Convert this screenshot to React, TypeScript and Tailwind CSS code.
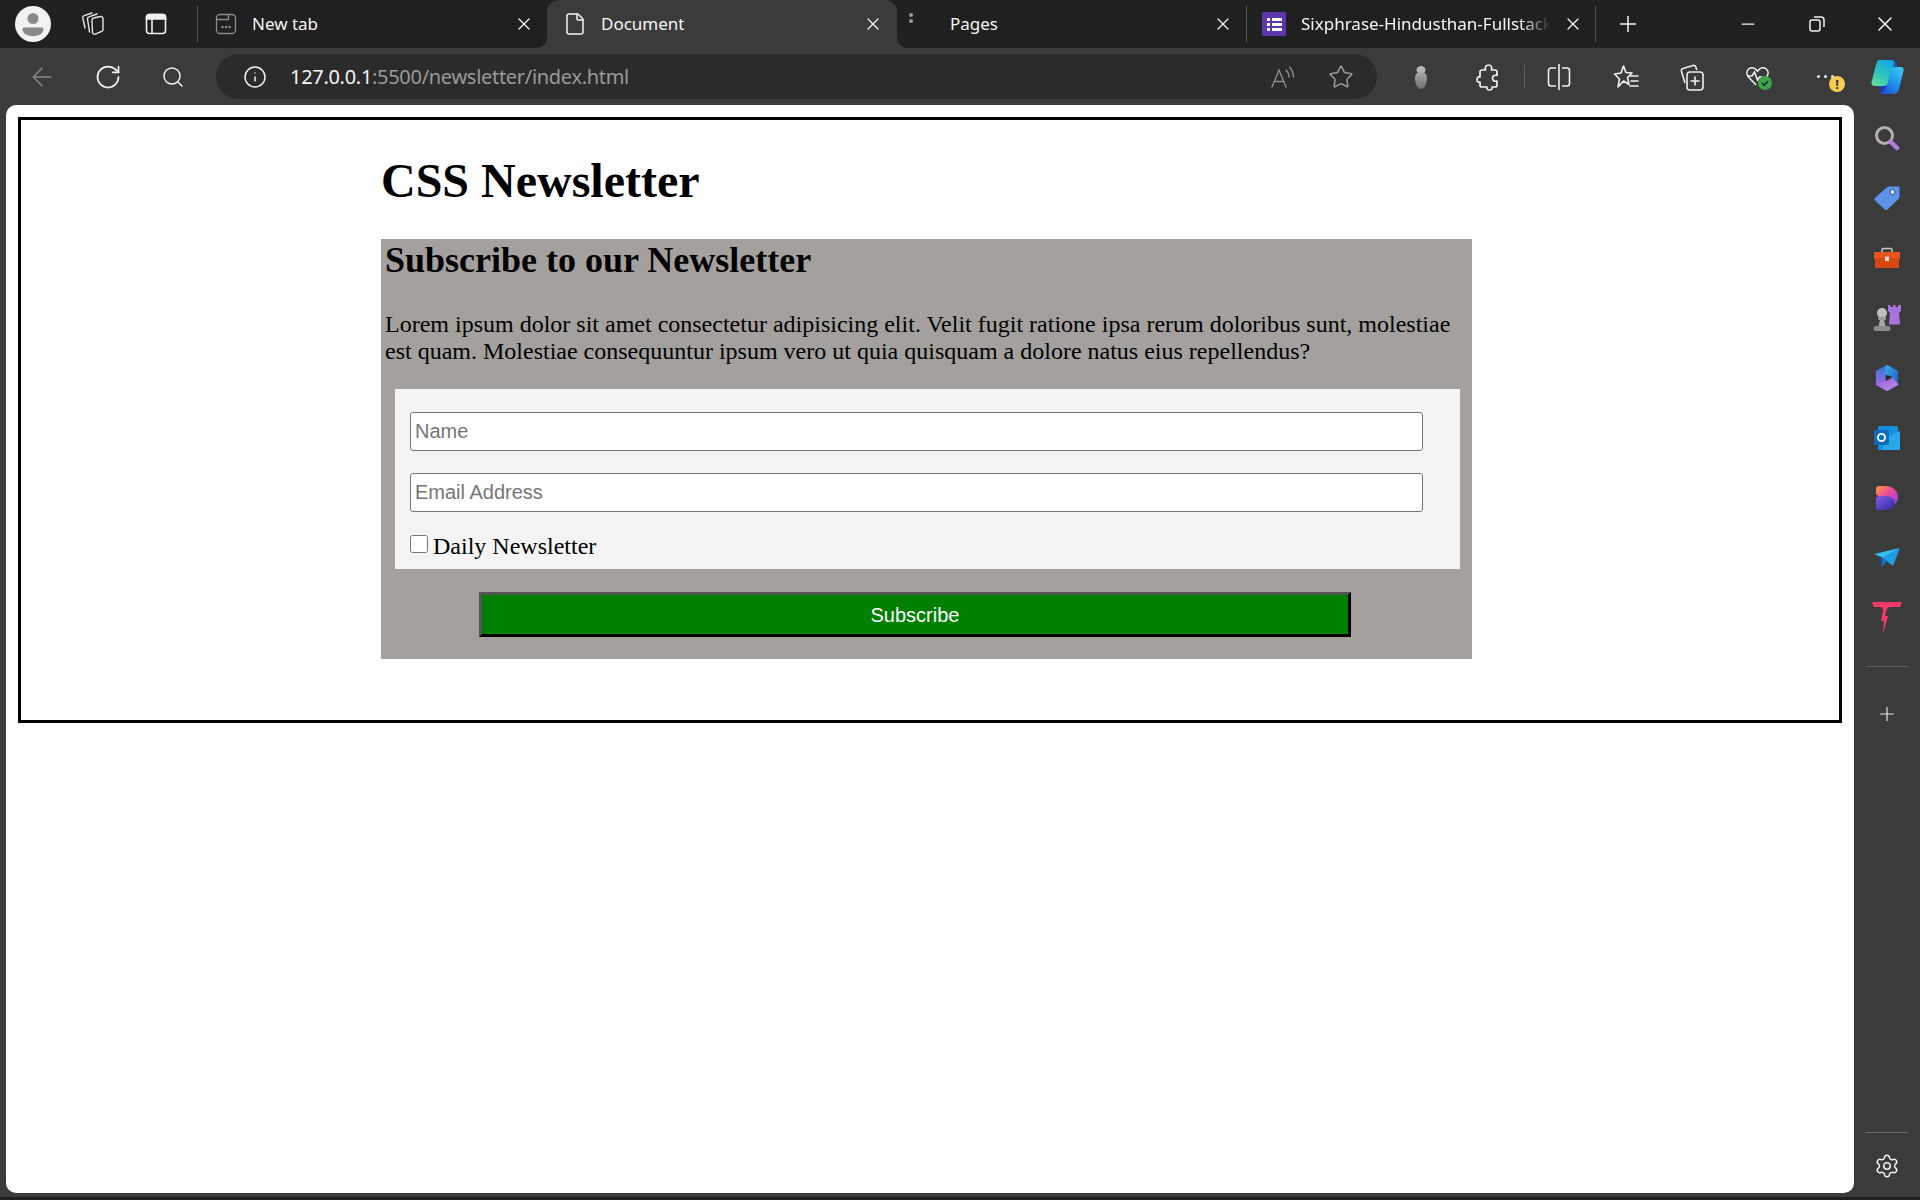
import { ArrowLeft, File, Info, Minus, Plus, RotateCw, Search, Settings, Star, X } from "lucide-react";

const uiFont = "font-['Noto_Sans',sans-serif]";

function Avatar() {
  return (
    <svg width="36" height="36" viewBox="0 0 36 36">
      <circle cx="18" cy="18" r="18" fill="#f2f2f2" />
      <circle cx="18" cy="12.5" r="5.5" fill="#8a8a8a" />
      <path d="M9 21.5h18a1.500 1.500 0 0 1 1.500 1.500c0 4.500-4.500 7-10.500 7s-10.500-2.500-10.500-7a1.500 1.500 0 0 1 1.500-1.500z" fill="#8a8a8a" />
    </svg>
  );
}

function WorkspacesIcon() {
  return (
    <svg width="24" height="24" viewBox="0 0 24 24" fill="none" stroke="#e6e6e6" strokeWidth="1.400" strokeLinecap="round" strokeLinejoin="round">
      <path d="M11 8a2 2 0 0 1 1.600-2l7-1.500a2 2 0 0 1 2.400 2v11a2 2 0 0 1-1.300 1.900l-6.500 2.800a2 2 0 0 1-2.700-1.700z" />
      <path d="M8.500 20 6.500 7a2 2 0 0 1 1.400-2.200L16 2" />
      <path d="M4 16 1.800 6a2 2 0 0 1 1.400-2.300L11 1" />
    </svg>
  );
}

function VerticalTabsIcon() {
  return (
    <svg width="22" height="22" viewBox="0 0 22 22" fill="none" stroke="#f0f0f0" strokeWidth="1.600">
      <rect x="1.500" y="1.500" width="19" height="19" rx="3" />
      <path d="M1.500 6h19v-2a2.500 2.500 0 0 0-2.500-2.500h-14a2.500 2.500 0 0 0-2.500 2.500z" fill="#f0f0f0" />
      <path d="M7 6v14.500" />
    </svg>
  );
}

function NewTabIcon() {
  return (
    <svg width="22" height="22" viewBox="0 0 22 22" fill="none" stroke="#8c8c8c" strokeWidth="1.300">
      <rect x="1.500" y="1.500" width="19" height="19" rx="3.500" />
      <path d="M1.500 6.500h12v-5" />
      <circle cx="7.500" cy="14" r=".6" fill="#8c8c8c" />
      <circle cx="11" cy="14" r=".6" fill="#8c8c8c" />
      <circle cx="14.500" cy="14" r=".6" fill="#8c8c8c" />
    </svg>
  );
}

function FormsIcon() {
  return (
    <svg width="24" height="24" viewBox="0 0 24 24">
      <rect width="24" height="24" rx="2" fill="#5e35b1" />
      <g fill="#fff">
        <rect x="5" y="6" width="3" height="3" />
        <rect x="10" y="6" width="10" height="3" />
        <rect x="5" y="11" width="3" height="3" />
        <rect x="10" y="11" width="10" height="3" />
        <rect x="5" y="16" width="3" height="3" />
        <rect x="10" y="16" width="10" height="3" />
      </g>
    </svg>
  );
}

function ReadAloudIcon() {
  return (
    <svg width="28" height="26" viewBox="0 0 28 26" fill="none" stroke="#8f8f8f" strokeWidth="1.400" strokeLinecap="round">
      <path d="M3 23 10 6l7 17M5.500 17.500h9" />
      <path d="M17 6c2 2 3 4 3 7M20.500 3c2.500 2.800 4 6 4 10" />
    </svg>
  );
}

function BugIcon() {
  return (
    <svg width="22" height="28" viewBox="0 0 22 28">
      <defs>
        <linearGradient id="bug" x1="0" y1="0" x2="0" y2="1">
          <stop offset="0" stopColor="#a8a8a8" />
          <stop offset="1" stopColor="#6f6f6f" />
        </linearGradient>
      </defs>
      <ellipse cx="11" cy="7" rx="4.500" ry="4" fill="#b5b5b5" />
      <path d="M5 15c0-4 2.500-6 6-6s6 2 6 6c0 6-2.500 11-6 11s-6-5-6-11z" fill="url(#bug)" />
    </svg>
  );
}

function PuzzleIcon() {
  return (
    <svg width="24" height="28" viewBox="0 0 24 28" fill="none" stroke="#f0f0f0" strokeWidth="1.700" strokeLinejoin="round">
      <path d="M6 7h3.500c-.8-3 .5-5 3-5s3.800 2 3 5H19a2 2 0 0 1 2 2v3.500c-2.800-.8-4.500.6-4.500 2.800s1.700 3.500 4.500 2.700V22a2 2 0 0 1-2 2h-3c.6 2-.8 3-2.500 3s-3.200-1-2.500-3H6a2 2 0 0 1-2-2v-3c-2 .6-3-.8-3-2.500s1-3.200 3-2.500V9a2 2 0 0 1 2-2z" />
    </svg>
  );
}

function SplitIcon() {
  return (
    <svg width="24" height="28" viewBox="0 0 24 28" fill="none" stroke="#f0f0f0" strokeWidth="1.600">
      <path d="M9 5H4a2.500 2.500 0 0 0-2.500 2.500v13A2.500 2.500 0 0 0 4 23h5M15 5h5a2.500 2.500 0 0 1 2.500 2.500v13A2.500 2.500 0 0 1 20 23h-5" />
      <path d="M12 1v26" />
    </svg>
  );
}

function FavouritesIcon() {
  return (
    <svg width="26" height="28" viewBox="0 0 26 28" fill="none" stroke="#f0f0f0" strokeWidth="1.600" strokeLinejoin="round">
      <path d="M10.500 3 13 9.500l6 .5-4.500 4.500 1.500 7-5.500-3.500L5 24l1.500-8L1.500 11l6.500-1z" />
      <path d="M17 13h8M18 18h7M17 23h8" strokeLinecap="round" />
    </svg>
  );
}

function CollectionsIcon() {
  return (
    <svg width="26" height="30" viewBox="0 0 26 30" fill="none" stroke="#f0f0f0" strokeWidth="1.600" strokeLinejoin="round">
      <path d="M6 21 2.500 9.500c-.5-1.500.2-2.700 1.500-3L14 3.500c1.300-.4 2.300.2 2.800 1.500l1 3" />
      <rect x="8" y="10" width="16" height="18" rx="3" />
      <path d="M16 14.500v9M11.500 19h9" />
    </svg>
  );
}

function HealthIcon() {
  return (
    <svg width="30" height="30" viewBox="0 0 30 30" fill="none">
      <path d="M12 23 4.500 15c-5-6 3-13 8-7l1 1.200 1-1.200c5-6 13 1 8 7" stroke="#f0f0f0" strokeWidth="1.600" />
      <path d="M3 14h5l2.500-4 3 8 2-3h3" stroke="#f0f0f0" strokeWidth="1.600" />
      <circle cx="21" cy="21" r="7" fill="#3fa14a" />
      <path d="m18 21 2.200 2.200 3.800-4" stroke="#123" strokeWidth="1.500" />
    </svg>
  );
}

function CopilotIcon() {
  return (
    <svg width="33" height="36" viewBox="0 0 33 36">
      <defs>
        <linearGradient id="cpA" x1="0.700" y1="0" x2="0.200" y2="1">
          <stop offset="0" stopColor="#12a8e0" />
          <stop offset="0.550" stopColor="#2fc4c0" />
          <stop offset="1" stopColor="#5fdc98" />
        </linearGradient>
        <linearGradient id="cpB" x1="0.800" y1="0" x2="0.200" y2="1">
          <stop offset="0" stopColor="#3cc6f5" />
          <stop offset="0.600" stopColor="#1c8cec" />
          <stop offset="1" stopColor="#2450d8" />
        </linearGradient>
      </defs>
      <path d="M20 1c3 0 6 2 6 7l-6 8-2-8z" fill="#1658b8" />
      <path d="M7 27c2 2 3 4 5 6l8-4-6-5z" fill="#1e3cc0" />
      <path d="M9 1h11c2.500 0 3.500 1.500 3 3.500L18 23c-.6 2.200-2.500 4-5 4H4c-2.500 0-4-1.500-3.500-4L5.500 4C6 2 7 1 9 1z" fill="url(#cpA)" />
      <path d="M24 8h6c2 0 3 1.500 2.600 3.500L28 30c-.7 3-3 5-6 5H11c-1.500 0-2-1-1-1.500 3-1 5-3.500 6-7l4-15c.5-2 2-3.500 4-3.500z" fill="url(#cpB)" />
    </svg>
  );
}

function ToolbarIcons() {
  return (
    <>
      <div className="ml-[29px] flex w-[30px] justify-center"><BugIcon /></div>
      <div className="ml-[37px] flex w-[30px] justify-center"><PuzzleIcon /></div>
      <div className="ml-[21px] h-[24px] w-px bg-[#5f5f5f]" />
      <div className="ml-[19px] flex w-[30px] justify-center"><SplitIcon /></div>
      <div className="ml-[37px] flex w-[30px] justify-center"><FavouritesIcon /></div>
      <div className="ml-[36px] flex w-[30px] justify-center"><CollectionsIcon /></div>
      <div className="ml-[37px] flex w-[30px] justify-center"><HealthIcon /></div>
      <div className="relative ml-[36px] flex w-[30px] justify-center gap-[4px]">
        <span className="size-[3px] rounded-full bg-[#f0f0f0]" />
        <span className="size-[3px] rounded-full bg-[#f0f0f0]" />
        <span className="size-[3px] rounded-full bg-[#f0f0f0]" />
        <span className={`absolute left-[19px] top-[1px] flex size-[16px] items-center justify-center rounded-full bg-[#f5cd54] text-[13px] font-bold leading-none text-[#333] ${uiFont}`}>!</span>
      </div>
      <div className="ml-[31px] flex w-[33px] justify-center"><CopilotIcon /></div>
    </>
  );
}

function SideSearch() {
  return (
    <svg width="26" height="26" viewBox="0 0 26 26" fill="none">
      <circle cx="10.500" cy="10.500" r="8" stroke="#b4b0ad" strokeWidth="3" />
      <path d="m17 17 6 6" stroke="#b77be0" strokeWidth="4.500" strokeLinecap="round" />
    </svg>
  );
}

function SideTag() {
  return (
    <svg width="26" height="26" viewBox="0 0 26 26">
      <path d="M14 1.500h10.500a1 1 0 0 1 1 1V12a2 2 0 0 1-.6 1.400L13.500 24.500a2 2 0 0 1-2.800 0L1 15.500a2 2 0 0 1 0-2.800z" fill="#5c93e8" />
      <circle cx="18.500" cy="7" r="2.500" fill="#eef" stroke="#2c4f8a" />
    </svg>
  );
}

function SideToolbox() {
  return (
    <svg width="28" height="22" viewBox="0 0 28 22">
      <path d="M9 6V3a1.500 1.500 0 0 1 1.500-1.500h7A1.500 1.500 0 0 1 19 3v3" fill="none" stroke="#c9c9c9" strokeWidth="1.500" />
      <rect x="1" y="5" width="26" height="7" fill="#e8541e" />
      <rect x="2" y="11" width="24" height="10" rx="1" fill="#d9490f" />
      <rect x="12" y="9.500" width="4" height="4.500" fill="#d8d8d8" />
    </svg>
  );
}

function SideChess() {
  return (
    <svg width="28" height="28" viewBox="0 0 28 28">
      <circle cx="9" cy="9" r="5" fill="#bdbdbd" />
      <rect x="5" y="13" width="8" height="3" rx="1" fill="#9a9a9a" />
      <path d="M7 16h4l1.500 6h-7z" fill="#a8a8a8" />
      <rect x="0.500" y="22" width="17" height="5" rx="2.500" fill="#8c8c8c" />
      <path d="M15 1h2.500v2H20V1h2.500v2H25V1h3v6l-2 2 1 10c0 1-.5 1.500-1.500 1.500h-8c-1 0-1.500-.5-1.500-1.500l1-10-2-2z" fill="#a873dc" />
    </svg>
  );
}

function SideM365() {
  return (
    <svg width="26" height="28" viewBox="0 0 28 30">
      <defs>
        <linearGradient id="m3a" x1="0" y1="0" x2="1" y2="1">
          <stop offset="0" stopColor="#3aa8e8" />
          <stop offset="1" stopColor="#1f5fc8" />
        </linearGradient>
        <linearGradient id="m3b" x1="0.500" y1="0" x2="0.500" y2="1">
          <stop offset="0" stopColor="#3478d8" />
          <stop offset="1" stopColor="#9a6ce0" />
        </linearGradient>
        <linearGradient id="m3c" x1="0" y1="0" x2="1" y2="1">
          <stop offset="0" stopColor="#8a5fd8" />
          <stop offset="1" stopColor="#c58ae8" />
        </linearGradient>
      </defs>
      <path d="M3 8 14 2l-2 9v9l-9 2z" fill="url(#m3b)" stroke="url(#m3b)" strokeWidth="2" strokeLinejoin="round" />
      <path d="M14 2 25 8v14l-5-3.500V12l-8-1z" fill="url(#m3a)" stroke="url(#m3a)" strokeWidth="2" strokeLinejoin="round" />
      <path d="M3 22l9-2 8-4.500 5 6.500-11 6z" fill="url(#m3c)" stroke="url(#m3c)" strokeWidth="2" strokeLinejoin="round" />
      <path d="M12.500 11.500l6 3-6 3.500z" fill="#2a2a30" />
    </svg>
  );
}

function SideOutlook() {
  return (
    <svg width="26" height="26" viewBox="0 0 26 26">
      <rect x="4" y="1" width="20" height="24" rx="1.500" fill="#1490df" />
      <path d="M12 13 26 6v18a1 1 0 0 1-1 1H8z" fill="#28a8ea" />
      <rect x="0" y="5" width="15" height="15" rx="1.500" fill="#0f6cbd" />
      <circle cx="7.500" cy="12.500" r="3.600" fill="none" stroke="#fff" strokeWidth="1.800" />
    </svg>
  );
}

function SideDesigner() {
  return (
    <svg width="24" height="26" viewBox="0 0 24 26">
      <defs>
        <linearGradient id="dsA" x1="0" y1="0" x2="1" y2="0.800">
          <stop offset="0" stopColor="#ff9a3d" />
          <stop offset="0.550" stopColor="#e6489c" />
          <stop offset="1" stopColor="#a23fe0" />
        </linearGradient>
        <linearGradient id="dsB" x1="0" y1="0" x2="1" y2="1">
          <stop offset="0" stopColor="#8a5ae8" />
          <stop offset="1" stopColor="#2a2a9e" />
        </linearGradient>
      </defs>
      <path d="M1 4a3 3 0 0 1 3-3h7c7 0 12 5 12 11 0 3-1 5-3 7-1-3-4-5-8-5-6 0-9-3-11-5z" fill="url(#dsA)" />
      <path d="M1 14c0-2 2-3 4-3h5c6 0 10 3 10 8-2 4-5 6-9 6H4a3 3 0 0 1-3-3z" fill="url(#dsB)" />
    </svg>
  );
}

function SideTelegram() {
  return (
    <svg width="26" height="20" viewBox="0 0 26 20">
      <path d="M0 6 26 0 9 10z" fill="#35bdf5" />
      <path d="M26 0 19 18l-10-8z" fill="#1c9ee8" />
      <path d="M6 8 9 10l-1 9z" fill="#0c5fb0" />
      <path d="M9 10l3.500 3-4.500 6z" fill="#0e7ad0" />
    </svg>
  );
}

function SideBolt() {
  return (
    <svg width="30" height="32" viewBox="0 0 30 32">
      <path d="M0 0h30l-2 5H19c-3 0-4 1-4.500 3L13 14h3l-5 18 1-13H9l2-10c.4-2-.4-4-3-4H2z" fill="#f43a68" />
    </svg>
  );
}

const sideIcons = [SideSearch, SideTag, SideToolbox, SideChess, SideM365, SideOutlook, SideDesigner, SideTelegram, SideBolt];

export default function App() {
  return (
    <div className={`flex h-[1200px] w-[1920px] flex-col overflow-hidden bg-[#3b3b3b] ${uiFont}`}>
      {/* tab strip */}
      <div className="flex h-[48px] shrink-0 items-center bg-[#202020] text-[17px] text-[#f5f5f5]">
        <div className="flex w-[197px] items-center pl-[15px]">
          <Avatar />
          <div className="ml-[30px]"><WorkspacesIcon /></div>
          <div className="ml-[40px]"><VerticalTabsIcon /></div>
        </div>
        <div className="h-[36px] w-px bg-[#555]" />
        <div className="flex h-full w-[349px] items-center pl-[17px]">
          <NewTabIcon />
          <span className="ml-[15px] grow">New tab</span>
          <X size={20} strokeWidth={1.5} className="mr-[13px]" />
        </div>
        <div className="relative flex h-full w-[350px] items-center rounded-t-[12px] bg-[#3b3b3b] pl-[16px]">
          <span className="absolute bottom-0 left-[-10px] size-[10px] bg-[#3b3b3b]">
            <span className="block size-full rounded-br-[10px] bg-[#202020]" />
          </span>
          <span className="absolute bottom-0 right-[-10px] size-[10px] bg-[#3b3b3b]">
            <span className="block size-full rounded-bl-[10px] bg-[#202020]" />
          </span>
          <File size={24} strokeWidth={1.5} />
          <span className="ml-[14px] grow">Document</span>
          <X size={20} strokeWidth={1.5} className="mr-[14px]" />
        </div>
        <div className="relative flex h-full w-[349px] items-center pl-[53px]">
          <span className="absolute left-[12px] top-[13px] size-[4px] rounded-full bg-[#999]" />
          <span className="absolute left-[12px] top-[19px] size-[4px] rounded-full bg-[#999]" />
          <span className="grow">Pages</span>
          <X size={20} strokeWidth={1.5} className="mr-[13px]" />
        </div>
        <div className="h-[36px] w-px bg-[#555]" />
        <div className="flex h-full w-[348px] items-center pl-[15px]">
          <FormsIcon />
          <span className="ml-[15px] w-[250px] overflow-hidden whitespace-nowrap [mask-image:linear-gradient(to_right,black_88%,transparent)]">
            Sixphrase-Hindusthan-Fullstack
          </span>
          <X size={20} strokeWidth={1.5} className="ml-[12px]" />
        </div>
        <div className="h-[36px] w-px bg-[#555]" />
        <Plus size={26} strokeWidth={1.4} className="ml-[19px]" />
        <div className="ml-auto flex items-center">
          <Minus size={20} strokeWidth={1.5} className="mr-[1px]" />
          <svg width="18" height="18" viewBox="0 0 18 18" fill="none" stroke="#f0f0f0" strokeWidth="1.500" className="ml-[49px]">
            <rect x="2" y="5" width="10" height="11" rx="2" />
            <path d="M6 2h7a3 3 0 0 1 3 3v7" />
          </svg>
          <X size={24} strokeWidth={1.5} className="ml-[47px] mr-[23px]" />
        </div>
      </div>

      {/* toolbar */}
      <div className="flex h-[57px] shrink-0 items-center text-[#f0f0f0]">
        <ArrowLeft size={30} strokeWidth={1.1} className="ml-[27px] text-[#8a8a8a]" />
        <RotateCw size={28} strokeWidth={1.5} className="ml-[37px]" />
        <Search size={24} strokeWidth={1.5} className="ml-[39px]" />
        <div className="ml-[31px] flex h-[45px] w-[1161px] items-center rounded-full bg-[#2b2b2b] pl-[27px] pr-[23px]">
          <Info size={24} strokeWidth={1.5} />
          <span className="ml-[23px] grow text-[20px] tracking-[-0.3px] text-[#9a9a9a]">
            <span className="text-[#f5f5f5]">127.0.0.1</span>:5500/newsletter/index.html
          </span>
          <ReadAloudIcon />
          <Star size={26} strokeWidth={1.4} className="ml-[31px] text-[#9a9a9a]" />
        </div>
        <ToolbarIcons />
      </div>

      {/* page + sidebar */}
      <div className="flex min-h-0 grow">
        <main className="ml-[6px] h-[1088px] w-[1848px] rounded-[10px] bg-white pl-[12px] pt-[12px] text-black font-['Liberation_Serif',serif]">
          <div className="h-[606px] w-[1824px] border-[3px] border-black pl-[360px] pt-[33px]">
            <h1 className="text-[48px] font-bold leading-[55px]">CSS Newsletter</h1>
            <section className="mt-[31px] h-[420px] w-[1091px] bg-[#a4a09e] pl-[4px] pt-[1px]">
              <h2 className="text-[36px] font-bold leading-[41px]">Subscribe to our Newsletter</h2>
              <p className="mt-[30px] pr-[6px] text-[24px] leading-[27px]">
                Lorem ipsum dolor sit amet consectetur adipisicing elit. Velit fugit ratione ipsa rerum doloribus sunt, molestiae est quam. Molestiae consequuntur ipsum vero ut quia quisquam a dolore natus eius repellendus?
              </p>
              <form className="ml-[10px] mt-[24px] h-[180px] w-[1065px] bg-[#f4f4f4] pl-[15px] pt-[23px]">
                <input
                  placeholder="Name"
                  className="block h-[39px] w-[1013px] rounded-[3px] border border-[#767676] bg-white px-[4px] text-[20px] font-['Liberation_Sans',sans-serif] placeholder:text-[#757575]"
                />
                <input
                  placeholder="Email Address"
                  className="mt-[22px] block h-[39px] w-[1013px] rounded-[3px] border border-[#767676] bg-white px-[4px] text-[20px] font-['Liberation_Sans',sans-serif] placeholder:text-[#757575]"
                />
                <label className="mt-[21px] flex items-center text-[24px] leading-[27px]">
                  <input type="checkbox" className="mb-[5px] size-[18px]" />
                  <span className="ml-[5px]">Daily Newsletter</span>
                </label>
              </form>
              <button
                type="button"
                className="ml-[94px] mt-[23px] block h-[45px] w-[872px] border-[3px] border-b-black border-l-[#555] border-r-black border-t-[#555] bg-[#008000] text-[20px] text-white font-['Liberation_Sans',sans-serif]"
              >
                Subscribe
              </button>
            </section>
          </div>
        </main>

        <aside className="flex w-[66px] flex-col items-center pt-[3px]">
          {sideIcons.map((Icon, i) => (
            <div key={i} className="flex h-[60px] w-full items-center justify-center">
              <Icon />
            </div>
          ))}
          <div className="mt-[18px] h-px w-[42px] bg-[#5f5f5f]" />
          <Plus size={22} strokeWidth={1.3} className="mt-[36px] text-[#e6e6e6]" />
          <div className="mt-auto h-px w-[42px] bg-[#6a6a6a]" />
          <Settings size={26} strokeWidth={1.4} className="mb-[18px] mt-[20px] text-[#f0f0f0]" />
        </aside>
      </div>
      <div className="h-[3px] shrink-0 bg-[#202020]" />
    </div>
  );
}
